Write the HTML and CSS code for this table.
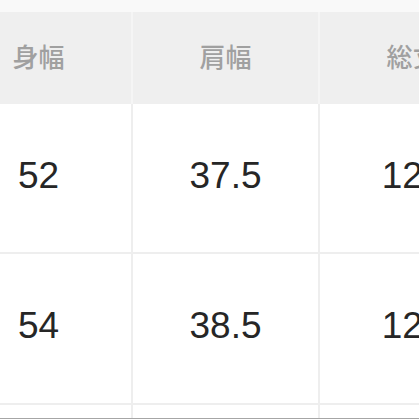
FILE: index.html
```html
<!DOCTYPE html>
<html lang="ja">
<head>
<meta charset="utf-8">
<link rel="stylesheet" href="styles.css">
</head>
<body>
<div class="table">
  <div class="head">
    <div class="hcell">身幅</div>
    <div class="hcell">肩幅</div>
    <div class="hcell">総丈</div>
  </div>
  <div class="rows">
    <div class="cell">52</div>
    <div class="cell">37.5</div>
    <div class="cell">125</div>
    <div class="cell">54</div>
    <div class="cell">38.5</div>
    <div class="cell">127</div>
    <div class="cell short"></div>
    <div class="cell short"></div>
    <div class="cell short"></div>
  </div>
  <div class="edge"></div>
</div>
</body>
</html>
```
FILE: styles.css
```css
html, body {
  margin: 0;
  padding: 0;
}
body {
  width: 419px;
  height: 419px;
  overflow: hidden;
  background: #f9f9f9;
}
.table {
  padding-top: 12px;
  margin-left: -54px;
  width: 559px;
}
.head {
  display: grid;
  grid-template-columns: repeat(3, 185px);
  column-gap: 2px;
  background: #f5f5f5;
  height: 92px;
}
.hcell {
  background: #efefef;
  display: flex;
  align-items: center;
  justify-content: center;
  padding-bottom: 6px;
  font-family: "Noto Sans CJK JP", sans-serif;
  font-weight: 500;
  font-size: 26px;
  color: #a0a0a0;
}
.rows {
  display: grid;
  grid-template-columns: repeat(3, 185px);
  grid-template-rows: 148px 149px 13px;
  gap: 2px;
  background: #eeeeee;
}
.cell {
  background: #ffffff;
  display: flex;
  align-items: center;
  justify-content: center;
  padding-bottom: 5px;
  box-sizing: border-box;
  font-family: "Liberation Sans", Arial, sans-serif;
  font-size: 37px;
  color: #262626;
}
.short {
  padding-bottom: 0;
}
.edge {
  height: 1px;
  background: #a6a6a6;
}
```
